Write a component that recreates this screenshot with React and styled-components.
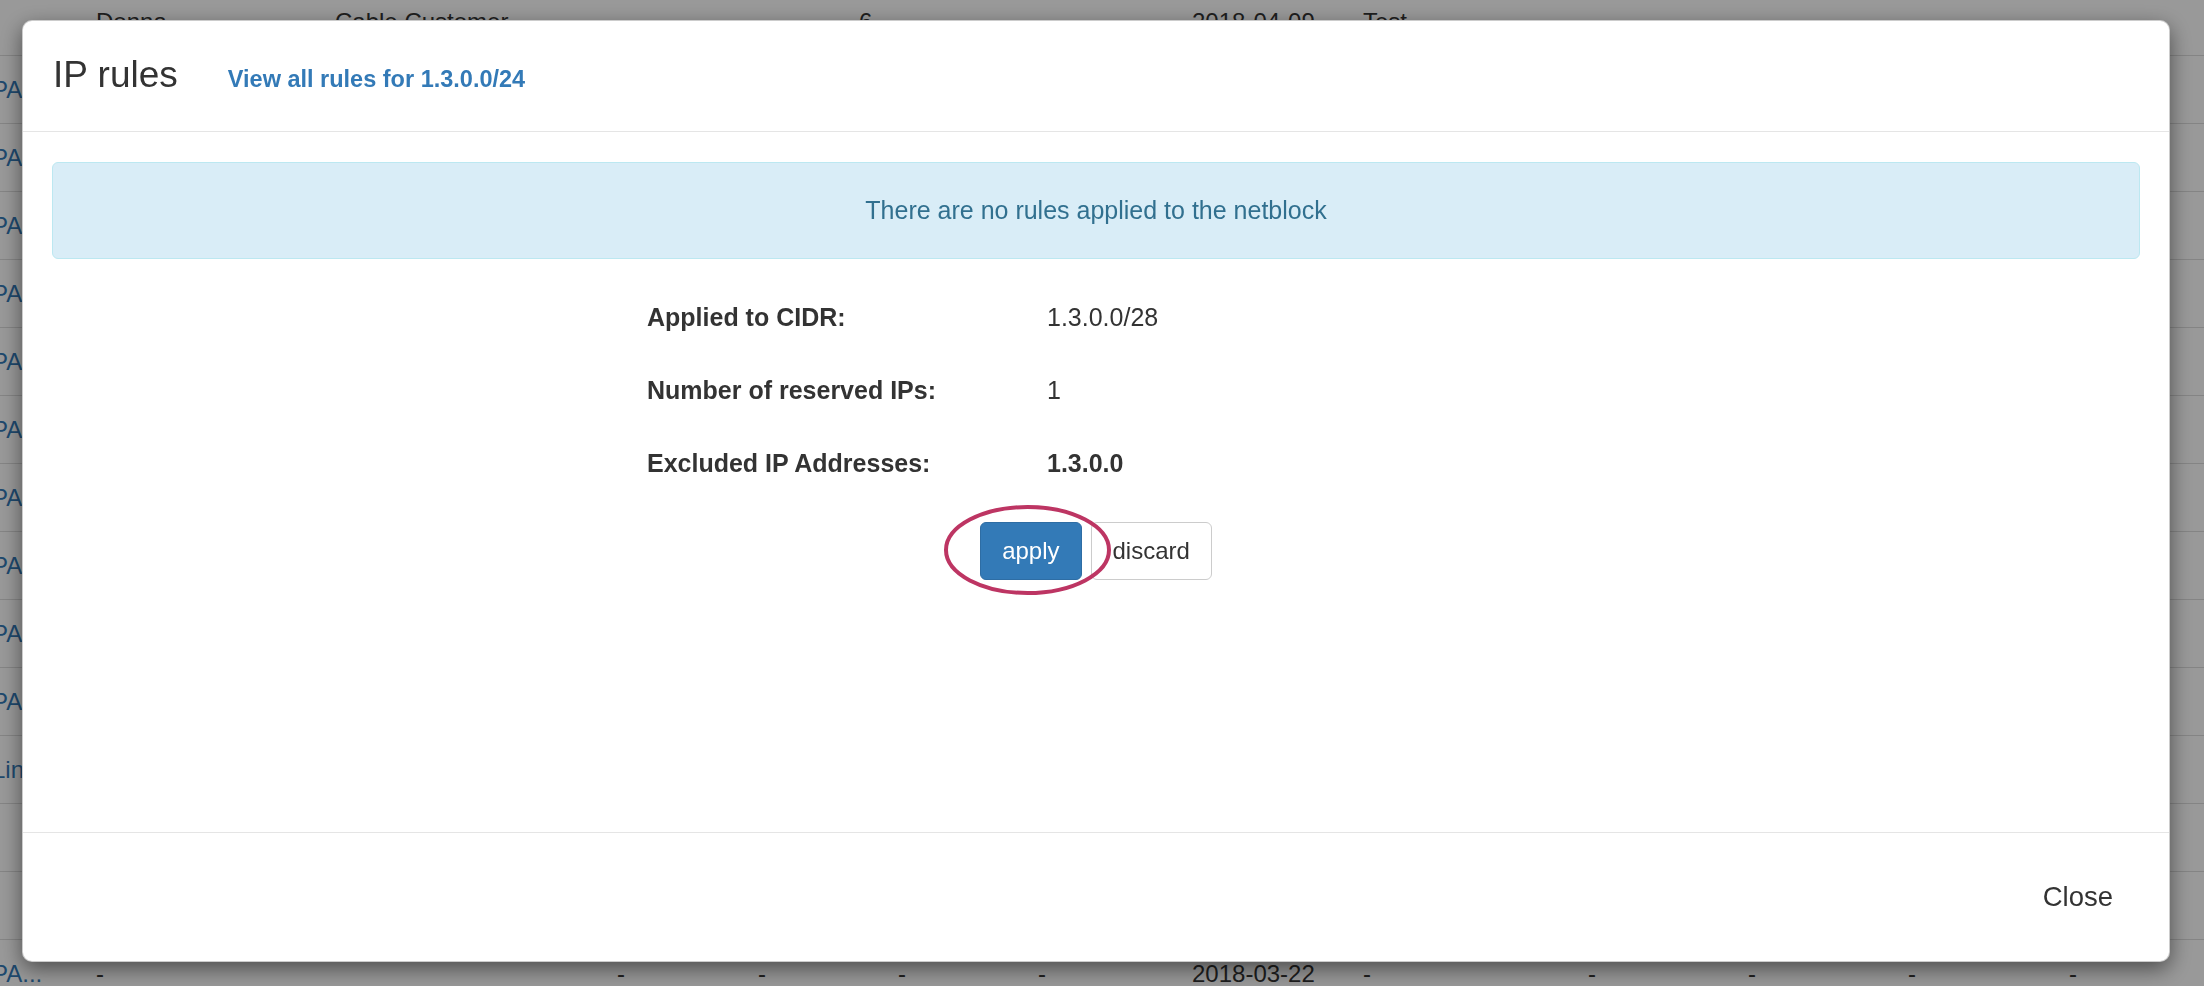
import styled, { createGlobalStyle } from 'styled-components';

const GlobalStyle = createGlobalStyle`
  html, body {
    margin: 0;
    padding: 0;
  }
  body {
    font-family: "Liberation Sans", Arial, Helvetica, sans-serif;
    color: #333;
    background: #fff;
    overflow: hidden;
  }
`;

const Page = styled.div`
  position: relative;
  height: 986px;
  overflow: hidden;
`;

const BgTable = styled.div`
  margin: -12px 0 0 -8px;
`;

const BgRow = styled.div`
  display: grid;
  grid-template-columns: 104px 239px 282px 141px 140px 140px 154px 171px 225px 160px 160px 161px 143px;
  height: 68px;
  box-sizing: border-box;
  border-bottom: 1px solid #ddd;
  align-items: center;
  font-size: 24px;
`;

const BgCell = styled.div`
  white-space: nowrap;
  overflow: hidden;
  color: ${p => (p.$link ? '#337ab7' : '#333')};
  padding-left: ${p => p.$indent || 0}px;
`;

const Backdrop = styled.div`
  position: fixed;
  inset: 0;
  background: rgba(0, 0, 0, 0.4);
`;

const DialogLayer = styled.div`
  position: fixed;
  inset: 0;
  display: flex;
  align-items: flex-start;
  padding: 20px 0 0 22px;
`;

const Modal = styled.div`
  width: 2148px;
  height: 942px;
  box-sizing: border-box;
  display: flex;
  flex-direction: column;
  background: #fff;
  border: 1px solid rgba(0, 0, 0, 0.2);
  border-radius: 10px;
  box-shadow: 0 7px 21px rgba(0, 0, 0, 0.5);
`;

const Header = styled.div`
  height: 111px;
  box-sizing: border-box;
  display: flex;
  align-items: baseline;
  padding: 34px 26px 0 30px;
  border-bottom: 1px solid #e5e5e5;
`;

const Title = styled.h4`
  margin: 0;
  font-size: 37px;
  line-height: 1.1;
  font-weight: normal;
  color: #333;
`;

const HeaderLink = styled.a`
  margin-left: 50px;
  font-size: 23.5px;
  font-weight: bold;
  color: #337ab7;
  text-decoration: none;
  cursor: pointer;
`;

const Body = styled.div`
  flex: 1;
  padding: 30px 29px 0;
`;

const InfoAlert = styled.div`
  height: 97px;
  box-sizing: border-box;
  display: flex;
  align-items: center;
  justify-content: center;
  background: #d9edf7;
  border: 1px solid #bce8f1;
  border-radius: 6px;
  color: #31708f;
  font-size: 25px;
`;

const InfoGrid = styled.div`
  width: 898px;
  margin: 22px auto 0;
  display: grid;
  grid-template-columns: 400px 1fr;
  grid-auto-rows: 73px;
  align-items: center;
  font-size: 25px;
  color: #333;
`;

const Label = styled.div`
  font-weight: bold;
`;

const Value = styled.div`
  font-weight: ${p => (p.$strong ? 'bold' : 'normal')};
`;

const Actions = styled.div`
  margin-top: 22px;
  display: flex;
  justify-content: center;
  gap: 9px;
`;

const ApplyWrap = styled.div`
  position: relative;
`;

const Btn = styled.button`
  height: 58px;
  padding: 0 21px;
  font-family: inherit;
  font-size: 24px;
  border-radius: 6px;
  border: 1px solid ${p => (p.$primary ? '#2e6da4' : '#ccc')};
  background: ${p => (p.$primary ? '#337ab7' : '#fff')};
  color: ${p => (p.$primary ? '#fff' : '#333')};
  cursor: pointer;
`;

const Ring = styled.svg`
  position: absolute;
  left: -36px;
  top: -17px;
  pointer-events: none;
  overflow: visible;
`;

const Footer = styled.div`
  height: 129px;
  box-sizing: border-box;
  border-top: 1px solid #e5e5e5;
  display: flex;
  align-items: center;
  justify-content: flex-end;
  padding-right: 56px;
`;

const CloseBtn = styled.button`
  padding: 0;
  border: none;
  background: none;
  font-family: inherit;
  font-size: 27.5px;
  color: #333;
  cursor: pointer;
`;

const bgRows = [
  [[''], ['Donna'], ['Cable Customer'], [''], ['6', 101], [''], [''], ['2018-04-09'], ['Test']],
  ...Array.from({ length: 10 }, () => [['PA', 0, true]]),
  [['Lin', 0, true]],
  [],
  [],
  [['PA...', 0, true], ['-'], [''], ['-'], ['-'], ['-'], ['-'], ['2018-03-22'], ['-'], ['-'], ['-'], ['-'], ['-']],
];

const details = [
  { label: 'Applied to CIDR:', value: '1.3.0.0/28' },
  { label: 'Number of reserved IPs:', value: '1' },
  { label: 'Excluded IP Addresses:', value: '1.3.0.0', strong: true },
];

export default function App() {
  return (
    <Page>
      <GlobalStyle />
      <BgTable>
        {bgRows.map((row, i) => (
          <BgRow key={i}>
            {row.map(([text, indent, link], j) => (
              <BgCell key={j} $indent={indent} $link={link}>
                {text}
              </BgCell>
            ))}
          </BgRow>
        ))}
      </BgTable>
      <Backdrop />
      <DialogLayer>
        <Modal>
          <Header>
            <Title>IP rules</Title>
            <HeaderLink>View all rules for 1.3.0.0/24</HeaderLink>
          </Header>
          <Body>
            <InfoAlert>There are no rules applied to the netblock</InfoAlert>
            <InfoGrid>
              {details.map(d => [
                <Label key={d.label}>{d.label}</Label>,
                <Value key={d.label + '-v'} $strong={d.strong}>
                  {d.value}
                </Value>,
              ])}
            </InfoGrid>
            <Actions>
              <ApplyWrap>
                <Btn $primary>apply</Btn>
                <Ring width="167" height="90" viewBox="0 0 167 90">
                  <ellipse
                    cx="83.5"
                    cy="45"
                    rx="81.5"
                    ry="43"
                    fill="none"
                    stroke="#bd3563"
                    strokeWidth="4"
                  />
                </Ring>
              </ApplyWrap>
              <Btn>discard</Btn>
            </Actions>
          </Body>
          <Footer>
            <CloseBtn>Close</CloseBtn>
          </Footer>
        </Modal>
      </DialogLayer>
    </Page>
  );
}
